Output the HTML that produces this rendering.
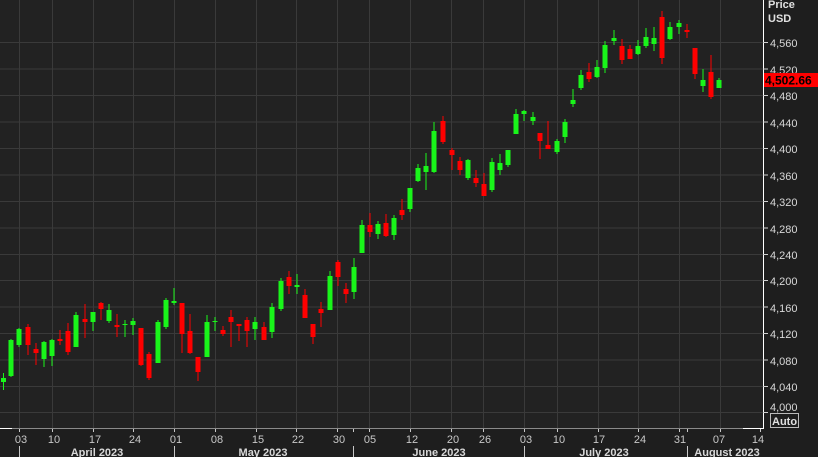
<!DOCTYPE html>
<html><head><meta charset="utf-8"><style>
html,body{margin:0;padding:0;background:#1e1e1e;width:818px;height:457px;overflow:hidden}
svg{display:block;font-family:"Liberation Sans",Arial,sans-serif}
</style></head><body>
<svg width="818" height="457" viewBox="0 0 818 457" xmlns="http://www.w3.org/2000/svg">
<rect x="0" y="0" width="818" height="457" fill="#1e1e1e"/>
<rect x="0" y="0" width="763" height="428" fill="#222222"/>
<g stroke="#3a3a3a" stroke-width="1">
<line x1="0" y1="42.5" x2="763" y2="42.5"/><line x1="0" y1="69" x2="763" y2="69"/><line x1="0" y1="95.5" x2="763" y2="95.5"/><line x1="0" y1="122" x2="763" y2="122"/><line x1="0" y1="148.5" x2="763" y2="148.5"/><line x1="0" y1="175" x2="763" y2="175"/><line x1="0" y1="201.5" x2="763" y2="201.5"/><line x1="0" y1="228" x2="763" y2="228"/><line x1="0" y1="254.5" x2="763" y2="254.5"/><line x1="0" y1="280.5" x2="763" y2="280.5"/><line x1="0" y1="307" x2="763" y2="307"/><line x1="0" y1="333.5" x2="763" y2="333.5"/><line x1="0" y1="360" x2="763" y2="360"/><line x1="0" y1="386.5" x2="763" y2="386.5"/><line x1="0" y1="412.5" x2="763" y2="412.5"/>
<line x1="19.5" y1="0" x2="19.5" y2="428"/><line x1="52.5" y1="0" x2="52.5" y2="428"/><line x1="93.5" y1="0" x2="93.5" y2="428"/><line x1="133.5" y1="0" x2="133.5" y2="428"/><line x1="174.5" y1="0" x2="174.5" y2="428"/><line x1="215.5" y1="0" x2="215.5" y2="428"/><line x1="256.5" y1="0" x2="256.5" y2="428"/><line x1="296.5" y1="0" x2="296.5" y2="428"/><line x1="337.5" y1="0" x2="337.5" y2="428"/><line x1="369.5" y1="0" x2="369.5" y2="428"/><line x1="410.5" y1="0" x2="410.5" y2="428"/><line x1="451.5" y1="0" x2="451.5" y2="428"/><line x1="483.5" y1="0" x2="483.5" y2="428"/><line x1="524.5" y1="0" x2="524.5" y2="428"/><line x1="557.5" y1="0" x2="557.5" y2="428"/><line x1="598.5" y1="0" x2="598.5" y2="428"/><line x1="638.5" y1="0" x2="638.5" y2="428"/><line x1="679.5" y1="0" x2="679.5" y2="428"/><line x1="720.5" y1="0" x2="720.5" y2="428"/>
</g>
<!-- green candles -->
<g fill="#19f51a">
<rect x="3" y="373" width="1" height="17"/><rect x="1" y="378" width="5" height="4"/>
<rect x="10.5" y="339" width="1" height="38"/><rect x="8.5" y="340" width="5" height="36"/>
<rect x="18.5" y="328" width="1" height="19"/><rect x="16.5" y="329" width="5" height="16"/>
<rect x="43.5" y="341" width="1" height="26"/><rect x="41.5" y="342" width="5" height="17"/>
<rect x="51.5" y="339" width="1" height="27"/><rect x="49.5" y="340" width="5" height="16"/>
<rect x="75.5" y="312" width="1" height="35"/><rect x="73.5" y="315" width="5" height="32"/>
<rect x="92.5" y="312" width="1" height="19"/><rect x="90.5" y="312" width="5" height="10"/>
<rect x="108.5" y="304" width="1" height="19"/><rect x="106.5" y="310" width="5" height="11"/>
<rect x="124.5" y="320" width="1" height="17"/><rect x="122.5" y="324" width="5" height="1"/>
<rect x="132.5" y="318" width="1" height="17"/><rect x="130.5" y="321" width="5" height="4"/>
<rect x="157.5" y="320" width="1" height="43"/><rect x="155.5" y="322" width="5" height="41"/>
<rect x="165.5" y="298" width="1" height="31"/><rect x="163.5" y="300" width="5" height="27"/>
<rect x="173.5" y="288" width="1" height="17"/><rect x="171.5" y="301" width="5" height="2"/>
<rect x="206.5" y="315" width="1" height="42"/><rect x="204.5" y="322" width="5" height="35"/>
<rect x="214.5" y="317" width="1" height="14"/><rect x="212.5" y="321" width="5" height="1"/>
<rect x="254.5" y="317" width="1" height="23"/><rect x="252.5" y="322" width="5" height="7"/>
<rect x="271.5" y="303" width="1" height="35"/><rect x="269.5" y="307" width="5" height="25"/>
<rect x="280.5" y="278" width="1" height="33"/><rect x="278.5" y="281" width="5" height="28"/>
<rect x="296.5" y="274" width="1" height="20"/><rect x="294.5" y="285" width="5" height="2"/>
<rect x="329.5" y="271" width="1" height="39"/><rect x="327.5" y="276" width="5" height="34"/>
<rect x="353.5" y="258" width="1" height="41"/><rect x="351.5" y="267" width="5" height="25"/>
<rect x="361.5" y="220" width="1" height="33"/><rect x="359.5" y="225" width="5" height="28"/>
<rect x="377.5" y="221" width="1" height="18"/><rect x="375.5" y="224" width="5" height="10"/>
<rect x="393.5" y="215" width="1" height="25"/><rect x="391.5" y="218" width="5" height="17"/>
<rect x="409.5" y="188" width="1" height="24"/><rect x="407.5" y="188" width="5" height="21"/>
<rect x="417.5" y="164" width="1" height="18"/><rect x="415.5" y="168" width="5" height="13"/>
<rect x="425.5" y="153" width="1" height="37"/><rect x="423.5" y="166" width="5" height="6"/>
<rect x="433.5" y="122" width="1" height="51"/><rect x="431.5" y="131" width="5" height="41"/>
<rect x="467.5" y="159" width="1" height="21"/><rect x="465.5" y="160" width="5" height="18"/>
<rect x="491.5" y="158" width="1" height="34"/><rect x="489.5" y="162" width="5" height="28"/>
<rect x="499.5" y="154" width="1" height="21"/><rect x="497.5" y="163" width="5" height="7"/>
<rect x="507.5" y="150" width="1" height="17"/><rect x="505.5" y="150" width="5" height="15"/>
<rect x="515.5" y="109" width="1" height="25"/><rect x="513.5" y="114" width="5" height="20"/>
<rect x="523.5" y="110" width="1" height="11"/><rect x="521.5" y="111" width="5" height="3"/>
<rect x="532.5" y="112" width="1" height="13"/><rect x="530.5" y="117" width="5" height="4"/>
<rect x="556.5" y="139" width="1" height="15"/><rect x="554.5" y="141" width="5" height="11"/>
<rect x="564.5" y="119" width="1" height="24"/><rect x="562.5" y="122" width="5" height="15"/>
<rect x="572.5" y="89" width="1" height="18"/><rect x="570.5" y="100" width="5" height="4"/>
<rect x="580.5" y="70" width="1" height="20"/><rect x="578.5" y="75" width="5" height="13"/>
<rect x="596.5" y="60" width="1" height="18"/><rect x="594.5" y="67" width="5" height="10"/>
<rect x="604.5" y="41" width="1" height="32"/><rect x="602.5" y="45" width="5" height="23"/>
<rect x="613.5" y="30" width="1" height="15"/><rect x="611.5" y="38" width="5" height="3"/>
<rect x="637.5" y="40" width="1" height="15"/><rect x="635.5" y="46" width="5" height="8"/>
<rect x="645.5" y="28" width="1" height="20"/><rect x="643.5" y="37" width="5" height="9"/>
<rect x="653.5" y="27" width="1" height="24"/><rect x="651.5" y="38" width="5" height="6"/>
<rect x="669.5" y="22" width="1" height="18"/><rect x="667.5" y="27" width="5" height="12"/>
<rect x="678.5" y="20" width="1" height="14"/><rect x="676.5" y="23" width="5" height="4"/>
<rect x="702.5" y="69" width="1" height="23"/><rect x="700.5" y="80" width="5" height="6"/>
<rect x="718.5" y="78" width="1" height="10"/><rect x="716.5" y="80" width="5" height="8"/>
</g>
<!-- red candles -->
<g fill="#ff0000">
<rect x="27.5" y="324" width="1" height="31"/><rect x="25.5" y="327" width="5" height="18"/>
<rect x="35.5" y="343" width="1" height="22"/><rect x="33.5" y="349" width="5" height="4"/>
<rect x="59.5" y="330" width="1" height="15"/><rect x="57.5" y="339" width="5" height="2"/>
<rect x="67.5" y="323" width="1" height="32"/><rect x="65.5" y="331" width="5" height="21"/>
<rect x="84.5" y="304" width="1" height="34"/><rect x="82.5" y="319" width="5" height="3"/>
<rect x="100.5" y="302" width="1" height="18"/><rect x="98.5" y="303" width="5" height="6"/>
<rect x="116.5" y="314" width="1" height="23"/><rect x="114.5" y="325" width="5" height="2"/>
<rect x="140.5" y="328" width="1" height="38"/><rect x="138.5" y="328" width="5" height="37"/>
<rect x="148.5" y="352" width="1" height="28"/><rect x="146.5" y="354" width="5" height="24"/>
<rect x="181.5" y="303" width="1" height="50"/><rect x="179.5" y="303" width="5" height="31"/>
<rect x="189.5" y="314" width="1" height="40"/><rect x="187.5" y="331" width="5" height="22"/>
<rect x="197.5" y="357" width="1" height="24"/><rect x="195.5" y="357" width="5" height="15"/>
<rect x="222.5" y="326" width="1" height="10"/><rect x="220.5" y="330" width="5" height="4"/>
<rect x="230.5" y="310" width="1" height="37"/><rect x="228.5" y="317" width="5" height="5"/>
<rect x="238.5" y="324" width="1" height="17"/><rect x="236.5" y="324" width="5" height="2"/>
<rect x="246.5" y="317" width="1" height="30"/><rect x="244.5" y="320" width="5" height="11"/>
<rect x="263.5" y="322" width="1" height="18"/><rect x="261.5" y="327" width="5" height="13"/>
<rect x="288.5" y="271" width="1" height="23"/><rect x="286.5" y="277" width="5" height="9"/>
<rect x="304.5" y="289" width="1" height="29"/><rect x="302.5" y="295" width="5" height="23"/>
<rect x="312.5" y="324" width="1" height="20"/><rect x="310.5" y="324" width="5" height="13"/>
<rect x="320.5" y="302" width="1" height="25"/><rect x="318.5" y="309" width="5" height="4"/>
<rect x="337.5" y="260" width="1" height="26"/><rect x="335.5" y="262" width="5" height="15"/>
<rect x="345.5" y="283" width="1" height="20"/><rect x="343.5" y="289" width="5" height="5"/>
<rect x="369.5" y="213" width="1" height="24"/><rect x="367.5" y="225" width="5" height="7"/>
<rect x="385.5" y="214" width="1" height="23"/><rect x="383.5" y="223" width="5" height="13"/>
<rect x="401.5" y="199" width="1" height="21"/><rect x="399.5" y="210" width="5" height="5"/>
<rect x="442.5" y="116" width="1" height="28"/><rect x="440.5" y="121" width="5" height="21"/>
<rect x="451.5" y="148" width="1" height="22"/><rect x="449.5" y="150" width="5" height="5"/>
<rect x="459.5" y="157" width="1" height="18"/><rect x="457.5" y="161" width="5" height="9"/>
<rect x="475.5" y="170" width="1" height="17"/><rect x="473.5" y="178" width="5" height="5"/>
<rect x="483.5" y="173" width="1" height="23"/><rect x="481.5" y="184" width="5" height="12"/>
<rect x="539.5" y="133" width="1" height="26"/><rect x="537.5" y="133" width="5" height="8"/>
<rect x="547.5" y="121" width="1" height="28"/><rect x="545.5" y="145" width="5" height="4"/>
<rect x="588.5" y="63" width="1" height="19"/><rect x="586.5" y="72" width="5" height="7"/>
<rect x="621.5" y="39" width="1" height="25"/><rect x="619.5" y="46" width="5" height="14"/>
<rect x="629.5" y="45" width="1" height="14"/><rect x="627.5" y="49" width="5" height="10"/>
<rect x="661.5" y="11" width="1" height="53"/><rect x="659.5" y="17" width="5" height="41"/>
<rect x="686.5" y="24" width="1" height="14"/><rect x="684.5" y="30" width="5" height="2"/>
<rect x="694.5" y="48" width="1" height="31"/><rect x="692.5" y="48" width="5" height="26"/>
<rect x="710.5" y="55" width="1" height="44"/><rect x="708.5" y="72" width="5" height="25"/>
</g>
<!-- axes -->
<line x1="0" y1="428.5" x2="763" y2="428.5" stroke="#8a8a8a"/>
<line x1="0" y1="428.5" x2="12" y2="428.5" stroke="#ffffff"/>
<line x1="743" y1="428.5" x2="764" y2="428.5" stroke="#ffffff"/>
<line x1="763.5" y1="0" x2="763.5" y2="429" stroke="#ffffff"/>
<g stroke="#d0d0d0">
<line x1="763" y1="42.5" x2="768" y2="42.5"/><line x1="763" y1="69" x2="768" y2="69"/><line x1="763" y1="95.5" x2="768" y2="95.5"/><line x1="763" y1="122" x2="768" y2="122"/><line x1="763" y1="148.5" x2="768" y2="148.5"/><line x1="763" y1="175" x2="768" y2="175"/><line x1="763" y1="201.5" x2="768" y2="201.5"/><line x1="763" y1="228" x2="768" y2="228"/><line x1="763" y1="254.5" x2="768" y2="254.5"/><line x1="763" y1="280.5" x2="768" y2="280.5"/><line x1="763" y1="307" x2="768" y2="307"/><line x1="763" y1="333.5" x2="768" y2="333.5"/><line x1="763" y1="360" x2="768" y2="360"/><line x1="763" y1="386.5" x2="768" y2="386.5"/><line x1="763" y1="412.5" x2="768" y2="412.5"/>
</g>
<g fill="#e0e0e0" font-size="11" font-weight="bold">
<text x="768" y="8">Price</text><text x="768" y="22">USD</text>
</g>
<g fill="#d8d8d8" font-size="11">
<text x="770" y="47">4,560</text><text x="770" y="74">4,520</text><text x="770" y="100">4,480</text><text x="770" y="127">4,440</text><text x="770" y="153">4,400</text><text x="770" y="180">4,360</text><text x="770" y="206">4,320</text><text x="770" y="233">4,280</text><text x="770" y="259">4,240</text><text x="770" y="285">4,200</text><text x="770" y="312">4,160</text><text x="770" y="338">4,120</text><text x="770" y="365">4,080</text><text x="770" y="391">4,040</text><text x="770" y="411">4,000</text>
</g>
<rect x="764" y="73" width="54" height="14" fill="#ff0000"/>
<text x="765" y="84.5" fill="#000" font-size="12" font-weight="bold">4,502.66</text>
<rect x="770.5" y="413.5" width="28" height="14" fill="none" stroke="#bbb"/>
<text x="772" y="425" fill="#e0e0e0" font-size="11" font-weight="bold">Auto</text>
<!-- x ticks -->
<g stroke="#c8c8c8">
<line x1="19.5" y1="429" x2="19.5" y2="432"/><line x1="52.5" y1="429" x2="52.5" y2="432"/><line x1="93.5" y1="429" x2="93.5" y2="432"/><line x1="133.5" y1="429" x2="133.5" y2="432"/><line x1="174.5" y1="429" x2="174.5" y2="432"/><line x1="215.5" y1="429" x2="215.5" y2="432"/><line x1="256.5" y1="429" x2="256.5" y2="432"/><line x1="296.5" y1="429" x2="296.5" y2="432"/><line x1="337.5" y1="429" x2="337.5" y2="432"/><line x1="369.5" y1="429" x2="369.5" y2="432"/><line x1="410.5" y1="429" x2="410.5" y2="432"/><line x1="451.5" y1="429" x2="451.5" y2="432"/><line x1="483.5" y1="429" x2="483.5" y2="432"/><line x1="524.5" y1="429" x2="524.5" y2="432"/><line x1="557.5" y1="429" x2="557.5" y2="432"/><line x1="598.5" y1="429" x2="598.5" y2="432"/><line x1="638.5" y1="429" x2="638.5" y2="432"/><line x1="679.5" y1="429" x2="679.5" y2="432"/><line x1="720.5" y1="429" x2="720.5" y2="432"/><line x1="760.5" y1="429" x2="760.5" y2="432"/>
<line x1="353.5" y1="429" x2="353.5" y2="432"/><line x1="687.5" y1="429" x2="687.5" y2="432"/>
<line x1="19.5" y1="446" x2="19.5" y2="457"/><line x1="174.5" y1="446" x2="174.5" y2="457"/><line x1="353.5" y1="446" x2="353.5" y2="457"/><line x1="524.5" y1="446" x2="524.5" y2="457"/><line x1="687.5" y1="446" x2="687.5" y2="457"/>
</g>
<g fill="#c8c8c8" font-size="11" text-anchor="middle">
<text x="21" y="443">03</text><text x="54" y="443">10</text><text x="95" y="443">17</text><text x="135" y="443">24</text><text x="176" y="443">01</text><text x="217" y="443">08</text><text x="258" y="443">15</text><text x="298" y="443">22</text><text x="339" y="443">30</text><text x="370" y="443">05</text><text x="412" y="443">12</text><text x="453" y="443">20</text><text x="485" y="443">26</text><text x="526" y="443">03</text><text x="559" y="443">10</text><text x="599" y="443">17</text><text x="640" y="443">24</text><text x="680" y="443">31</text><text x="719" y="443">07</text><text x="758" y="443">14</text>
</g>
<g fill="#d8d8d8" font-size="11" font-weight="bold" text-anchor="middle">
<text x="97" y="456">April 2023</text><text x="263" y="456">May 2023</text><text x="439" y="456">June 2023</text><text x="604" y="456">July 2023</text><text x="727" y="456">August 2023</text>
</g>
</svg>
</body></html>
